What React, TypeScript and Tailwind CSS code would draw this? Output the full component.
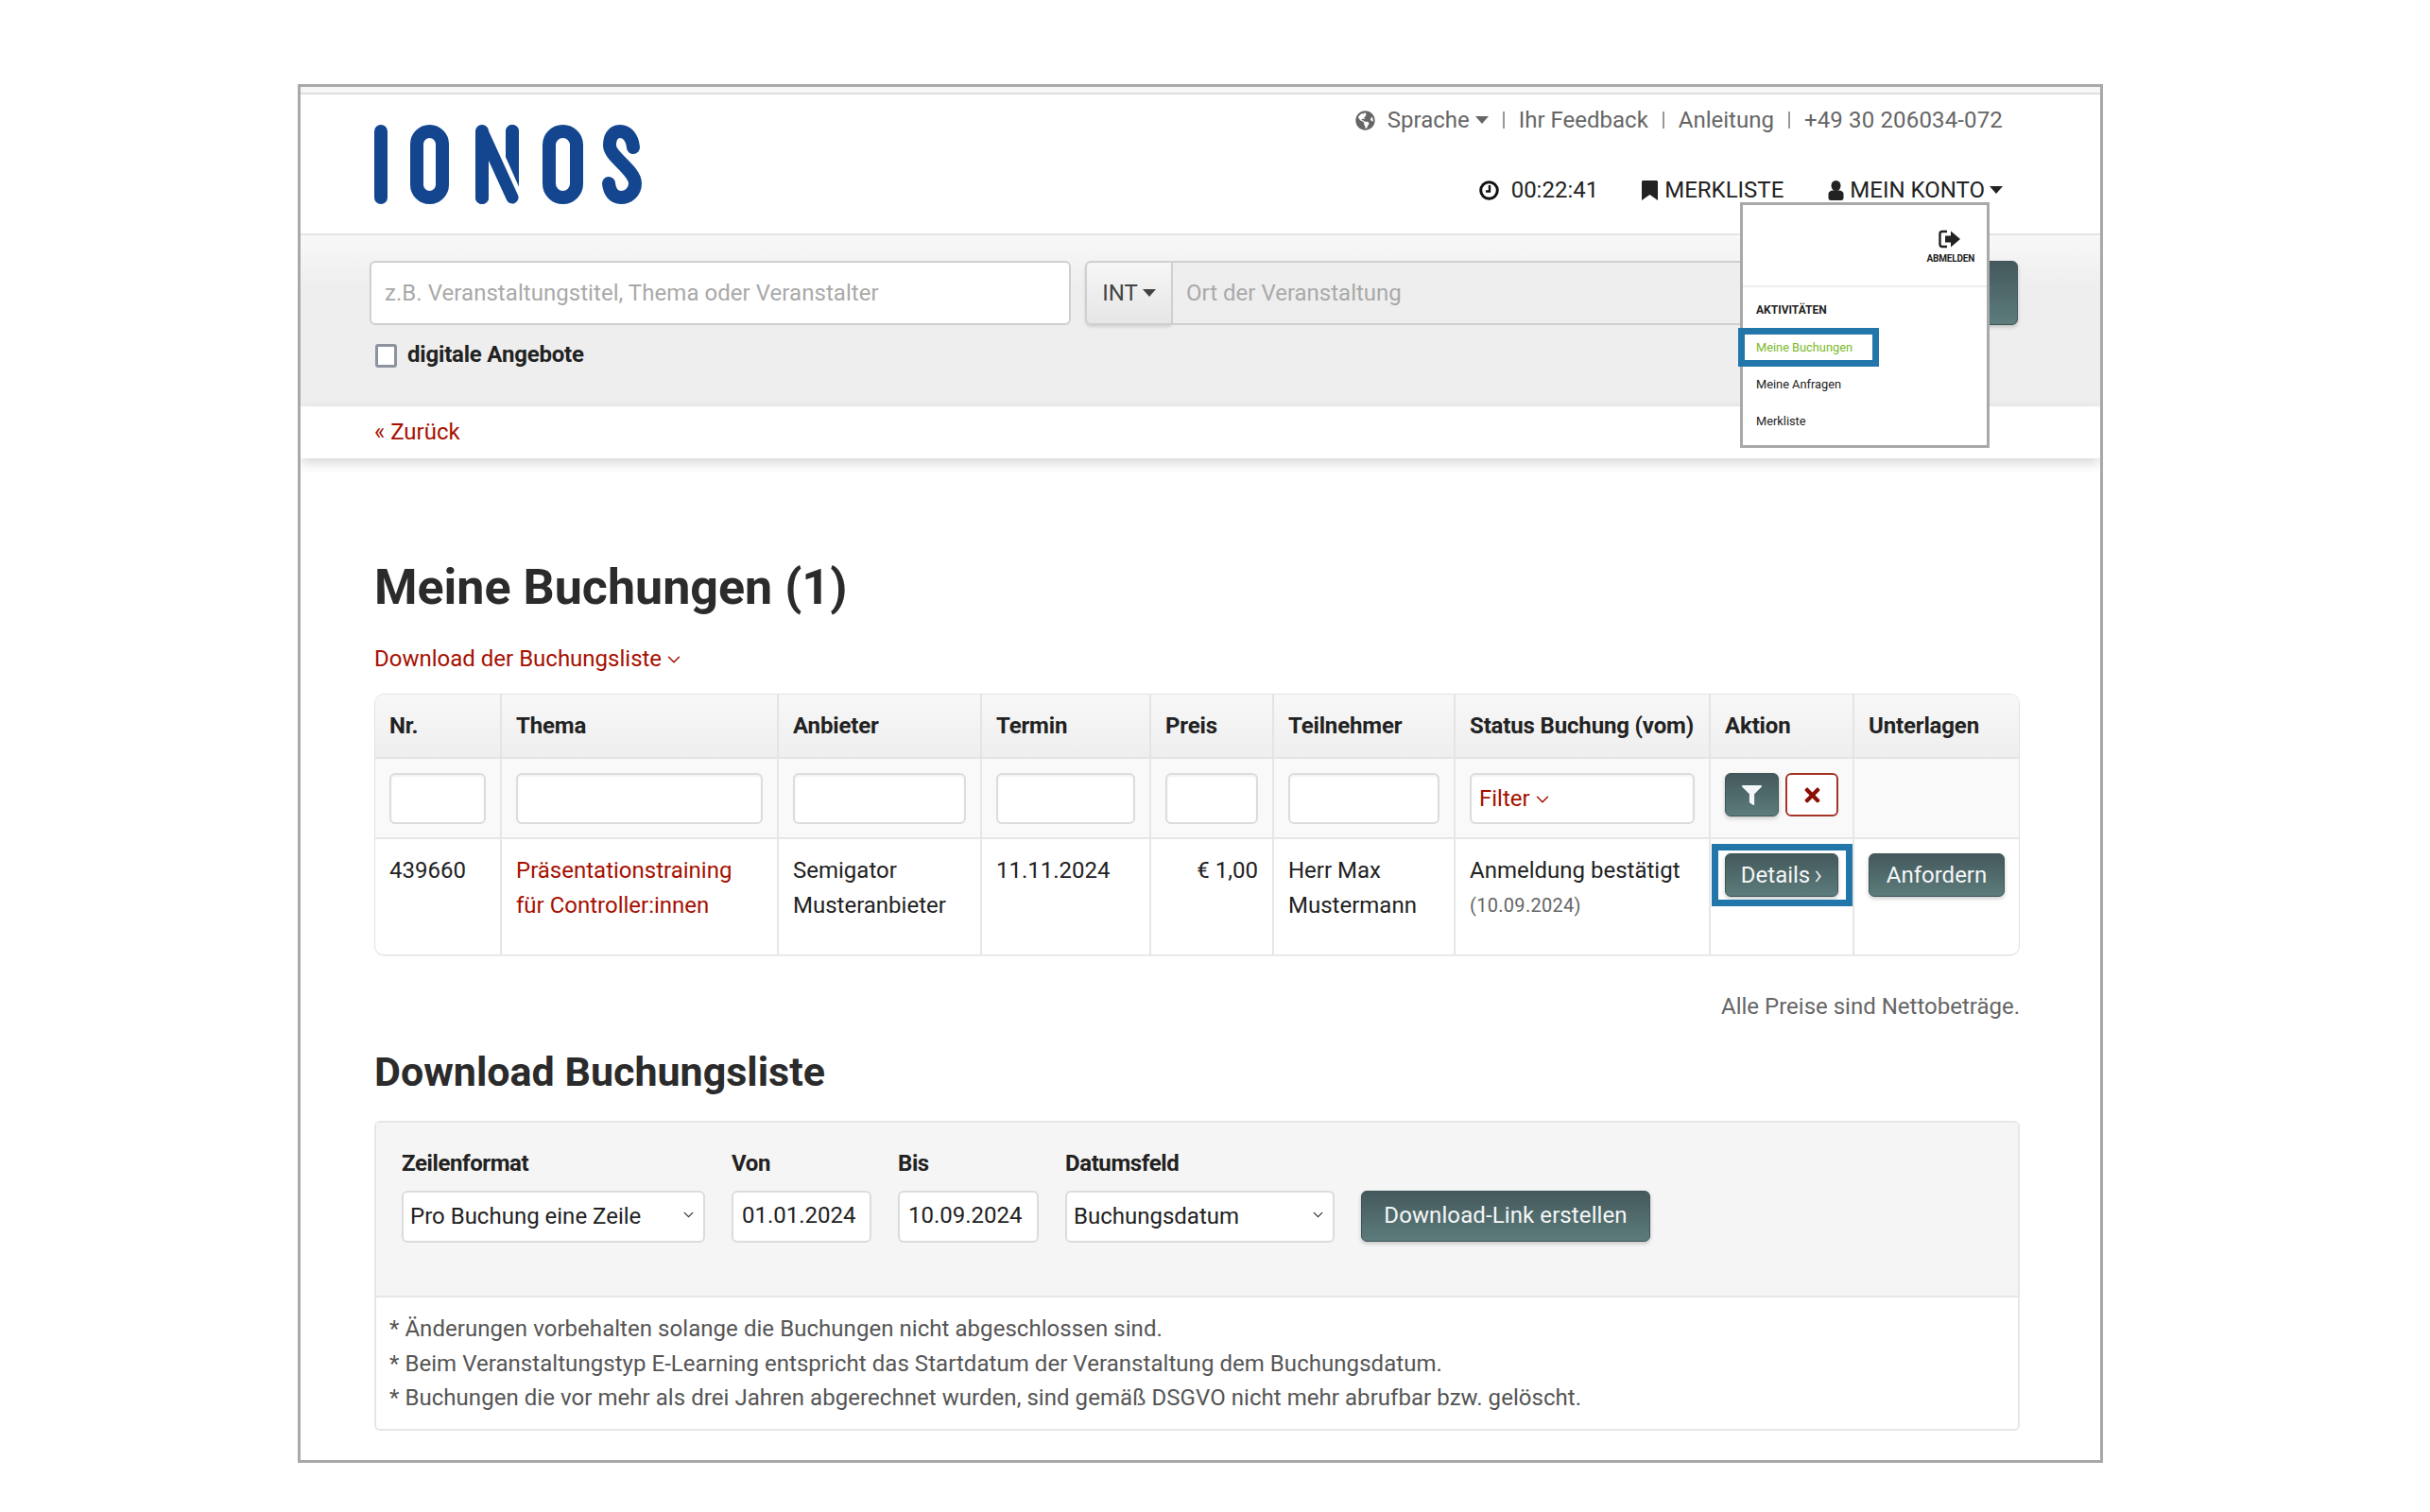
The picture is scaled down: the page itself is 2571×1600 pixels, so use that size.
import React from 'react';
import { ChevronDown } from 'lucide-react';
import { FaFilter, FaGlobeAmericas, FaTimes } from 'react-icons/fa';

const Logo = () => (
  <svg width="283" height="84" viewBox="0 0 283 84" fill="none" stroke="#13468f" strokeWidth="14" strokeLinecap="round">
    <path d="M7 7V77" />
    <rect x="45" y="7" width="27" height="70" rx="13.5" />
    <path d="M114 7V77M146 7V77" />
    <path d="M112 -2L152 88" stroke="#fff" strokeWidth="20" strokeLinecap="butt" />
    <path d="M114 7L146 77" strokeWidth="13" />
    <path d="M114 7V77M146 7V30" />
    <rect x="185" y="7" width="29" height="70" rx="14.5" />
    <path d="M274 24C273 13 267 7 260 7C252 7 249 14 249 22C249 34 276 48 276 62C276 71 269 77 261 77C253 77 249 71 248 62" />
  </svg>
);

const SignOut = () => (
  <svg width="24" height="20" viewBox="0 0 24 20" fill="#222">
    <path d="M9 2H4C2.5 2 1.5 3 1.5 4.5V15.5C1.5 17 2.5 18 4 18H9" fill="none" stroke="#222" strokeWidth="2.4" />
    <path d="M7 6.5H13V1.5L23 10L13 18.5V13.5H7Z" />
  </svg>
);

const ClockIcon = () => (
  <svg width="21" height="21" viewBox="0 0 21 21" fill="none" stroke="#111" className="mr-[13px]">
    <circle cx="10.5" cy="10.5" r="8.8" strokeWidth="3" />
    <path d="M11 5V11.5H7" strokeWidth="2.4" />
  </svg>
);

const BookmarkIcon = () => (
  <svg width="19" height="21" viewBox="0 0 19 21" fill="#222" className="ml-[45px] mr-[6px]">
    <path d="M1 1.5C1 .7 1.7 0 2.5 0H16.5C17.3 0 18 .7 18 1.5V21L9.5 15L1 21Z" />
  </svg>
);

const UserIcon = () => (
  <svg width="17" height="21" viewBox="0 0 17 21" fill="#222" className="ml-[47px] mr-[6px]">
    <ellipse cx="8.5" cy="5.5" rx="5" ry="5.5" />
    <path d="M.5 18.5V14.5C.5 11.5 3.5 10.5 5 10.5H12C13.5 10.5 16.5 11.5 16.5 14.5V18.5C16.5 20 15.5 21 14 21H3C1.500 21 .5 20 .5 18.5Z" />
  </svg>
);

const Caret = ({ className = '' }: { className?: string }) => (
  <span className={`h-0 w-0 border-x-[7px] border-t-[8px] border-x-transparent border-t-current ${className}`} />
);

const filterCell = 'h-[54px] w-full rounded-md border-2 border-[#dcdcdc] bg-white shadow-[inset_0_2px_2px_rgba(0,0,0,0.05)]';
const headCell = 'border-b-2 border-r-2 border-[#e4e4e4] px-[15px] text-left font-bold tracking-[-0.15px] whitespace-nowrap last:border-r-0';
const filterTd = 'border-b-2 border-r-2 border-[#e6e6e6] px-[15px] pt-[15px] align-top last:border-r-0';
const bodyTd = 'border-r-2 border-[#e6e6e6] px-[15px] pt-[15px] align-top leading-[37px] last:border-r-0';
const tealBtn = 'rounded-md border border-[#3f5558] bg-linear-to-b from-[#44595c] to-[#5d7c7c] text-[#f4f7f7] shadow-[0_2px_4px_rgba(0,0,0,0.2)]';
const fieldLabel = 'flex flex-col font-bold tracking-[-0.4px]';
const fieldBox = 'mt-[11px] h-[55px] w-full rounded-md border-2 border-[#dcdcdc] bg-white font-normal tracking-normal';

export default function App() {
  const notes = [
    'Änderungen vorbehalten solange die Buchungen nicht abgeschlossen sind.',
    'Beim Veranstaltungstyp E-Learning entspricht das Startdatum der Veranstaltung dem Buchungsdatum.',
    'Buchungen die vor mehr als drei Jahren abgerechnet wurden, sind gemäß DSGVO nicht mehr abrufbar bzw. gelöscht.',
  ];

  return (
    <div className="h-[1600px] w-full bg-white pl-[315px] pt-[89px] font-['Roboto',sans-serif] text-[24px] leading-[36px] text-[#222]">
      <div className="relative h-[1459px] w-[1910px] overflow-hidden border-[3px] border-[#a9a9a9]">
        {/* top strip */}
        <div className="h-[8px] border-b-2 border-[#dedede] bg-[#f6f7f8]" />

        {/* header */}
        <header className="flex h-[147px] justify-between pl-[78px] pr-[103px]">
          <div className="pt-[32px]">
            <Logo />
          </div>
          <div className="flex flex-col items-end pt-[9px]">
            <div className="flex items-center text-[#666]">
              <FaGlobeAmericas className="mr-[13px] text-[21px]" />
              <span>Sprache</span>
              <Caret className="ml-[6px]" />
              <span className="mx-[15px] h-[18px] w-[2px] bg-[#999]" />
              <span>Ihr Feedback</span>
              <span className="mx-[15px] h-[18px] w-[2px] bg-[#999]" />
              <span>Anleitung</span>
              <span className="mx-[15px] h-[18px] w-[2px] bg-[#999]" />
              <span className="tracking-[0.15px]">+49 30 206034-072</span>
            </div>
            <div className="mt-[38px] flex items-center">
              <ClockIcon />
              <span>00:22:41</span>
              <BookmarkIcon />
              <span>MERKLISTE</span>
              <UserIcon />
              <span>MEIN KONTO</span>
              <Caret className="ml-[5px]" />
            </div>
          </div>
        </header>

        {/* search */}
        <section className="h-[183px] border-t-2 border-[#e4e4e4] bg-linear-to-b from-[#f8f8f8] to-[#eeeeee] to-30% pl-[73px] pr-[87px] pt-[27px]">
          <div className="flex h-[68px]">
            <div className="flex w-[742px] items-center rounded-md border-2 border-[#cfcfcf] bg-white px-[14px] tracking-[0.05px] text-[#a9a9a9]">
              z.B. Veranstaltungstitel, Thema oder Veranstalter
            </div>
            <div className="ml-[15px] flex w-[91px] items-center justify-center rounded-l-md border-2 border-r-0 border-[#cfcfcf] bg-linear-to-b from-[#f6f6f6] to-[#e6e6e6] text-[#444] shadow-[0_2px_3px_rgba(0,0,0,0.12)]">
              INT
              <Caret className="ml-[5px]" />
            </div>
            <div className="flex flex-1 items-center border-y-2 border-l-2 border-[#cfcfcf] bg-[#eeeeee] pl-[14px] text-[#a9a9a9]">
              Ort der Veranstaltung
            </div>
            <button className={`${tealBtn} w-[90px]`} aria-label="Suchen" />
          </div>
          <div className="mt-[13px] flex items-center pl-[6px]">
            <span className="h-[25px] w-[23px] rounded-[3px] border-[3px] border-[#8d93a0] bg-white" />
            <span className="ml-[11px] pb-[2px] font-bold tracking-[-0.2px]">digitale Angebote</span>
          </div>
        </section>

        {/* back link */}
        <div className="relative flex h-[55px] items-center bg-white pb-[2px] pl-[78px] text-[#a61000] shadow-[0_5px_12px_rgba(0,0,0,0.16)]">
          « Zurück
        </div>

        {/* main */}
        <main className="pl-[78px] pr-[85px] pt-[106px]">
          <h1 className="text-[52px] font-bold leading-[62px] text-[#2b2b2b]">Meine Buchungen (1)</h1>
          <a className="mt-[26px] flex items-center text-[#a61000]">
            Download der Buchungsliste
            <ChevronDown className="ml-[2px] mt-[2px] size-[22px]" strokeWidth={1.6} />
          </a>

          <div className="mt-[19px] h-[277px] overflow-hidden rounded-[10px] border border-[#e2e2e2] shadow-[0_1px_1px_rgba(0,0,0,0.06)]">
            <table className="w-full table-fixed border-separate border-spacing-0">
              <colgroup>
                <col className="w-[134px]" />
                <col className="w-[293px]" />
                <col className="w-[215px]" />
                <col className="w-[179px]" />
                <col className="w-[130px]" />
                <col className="w-[192px]" />
                <col className="w-[270px]" />
                <col className="w-[152px]" />
                <col className="w-[174px]" />
              </colgroup>
              <thead>
                <tr className="h-[68px] bg-linear-to-b from-[#f8f8f8] to-[#eeeeee]">
                  <th className={headCell}>Nr.</th>
                  <th className={headCell}>Thema</th>
                  <th className={headCell}>Anbieter</th>
                  <th className={headCell}>Termin</th>
                  <th className={headCell}>Preis</th>
                  <th className={headCell}>Teilnehmer</th>
                  <th className={headCell}>Status Buchung (vom)</th>
                  <th className={headCell}>Aktion</th>
                  <th className={headCell}>Unterlagen</th>
                </tr>
              </thead>
              <tbody>
                <tr className="h-[85px] bg-[#f9f9f9]">
                  {[0, 1, 2, 3, 4, 5].map((i) => (
                    <td key={i} className={filterTd}>
                      <div className={filterCell} />
                    </td>
                  ))}
                  <td className={filterTd}>
                    <div className={`${filterCell} flex items-center pl-[8px] text-[#a61000]`}>
                      Filter
                      <ChevronDown className="ml-[2px] mt-[2px] size-[22px]" strokeWidth={1.6} />
                    </div>
                  </td>
                  <td className={filterTd}>
                    <div className="flex gap-[7px]">
                      <button className={`${tealBtn} flex h-[46px] w-[57px] items-center justify-center`} aria-label="Filtern">
                        <FaFilter className="text-[21px]" />
                      </button>
                      <button className="flex h-[46px] w-[56px] items-center justify-center rounded-md border-2 border-[#a5352a] bg-white text-[#8a0f05]" aria-label="Löschen">
                        <FaTimes className="text-[23px]" />
                      </button>
                    </div>
                  </td>
                  <td className={filterTd} />
                </tr>
                <tr className="h-[122px]">
                  <td className={bodyTd}>439660</td>
                  <td className={`${bodyTd} text-[#a61000]`}>Präsentationstraining für Controller:innen</td>
                  <td className={bodyTd}>Semigator Musteranbieter</td>
                  <td className={bodyTd}>11.11.2024</td>
                  <td className={`${bodyTd} text-right`}>€ 1,00</td>
                  <td className={bodyTd}>Herr Max Mustermann</td>
                  <td className={bodyTd}>
                    Anmeldung bestätigt
                    <div className="text-[20px] tracking-[0.3px] text-[#666]">(10.09.2024)</div>
                  </td>
                  <td className={bodyTd}>
                    <div className="relative flex">
                      <button className={`${tealBtn} flex h-[46px] w-[120px] items-center justify-center gap-[4px] leading-none`}>
                        Details
                        <span className="pb-[3px] text-[30px] font-light leading-none">›</span>
                      </button>
                      <div className="absolute -left-[14px] -top-[10px] h-[66px] w-[149px] border-[7px] border-[#2376a9]" />
                    </div>
                  </td>
                  <td className={bodyTd}>
                    <button className={`${tealBtn} block h-[46px] w-[144px] leading-none`}>Anfordern</button>
                  </td>
                </tr>
              </tbody>
            </table>
          </div>

          <p className="mt-[36px] text-right text-[#666]">Alle Preise sind Nettobeträge.</p>

          <h2 className="mt-[26px] text-[43px] font-bold leading-[50px] text-[#2b2b2b]">Download Buchungsliste</h2>

          <div className="mt-[27px] h-[328px] rounded-md border-2 border-[#e6e6e6]">
            <div className="h-[185px] border-b-2 border-[#e6e6e6] bg-[#f5f5f5] pl-[27px] pt-[25px]">
              <div className="flex gap-[28px]">
                <label className={`${fieldLabel} w-[321px]`}>
                  Zeilenformat
                  <span className="relative block">
                    <select defaultValue="a" className={`${fieldBox} appearance-none pb-[2px] pl-[7px]`}>
                      <option value="a">Pro Buchung eine Zeile</option>
                    </select>
                    <ChevronDown className="absolute right-[9px] top-[28px] size-[17px]" strokeWidth={1.6} />
                  </span>
                </label>
                <label className={`${fieldLabel} w-[148px]`}>
                  Von
                  <input readOnly value="01.01.2024" className={`${fieldBox} px-[9px] pb-[3px]`} />
                </label>
                <label className={`${fieldLabel} w-[149px]`}>
                  Bis
                  <input readOnly value="10.09.2024" className={`${fieldBox} px-[9px] pb-[3px]`} />
                </label>
                <label className={`${fieldLabel} w-[285px]`}>
                  Datumsfeld
                  <span className="relative block">
                    <select defaultValue="b" className={`${fieldBox} appearance-none pb-[2px] pl-[7px]`}>
                      <option value="b">Buchungsdatum</option>
                    </select>
                    <ChevronDown className="absolute right-[9px] top-[28px] size-[17px]" strokeWidth={1.6} />
                  </span>
                </label>
                <button className={`${tealBtn} mt-[47px] h-[54px] w-[306px] pb-[2px] tracking-[0.1px]`}>Download-Link erstellen</button>
              </div>
            </div>
            <div className="pl-[14px] pt-[15px] leading-[36.5px] tracking-[0.05px] text-[#555]">
              {notes.map((note) => (
                <p key={note}>* {note}</p>
              ))}
            </div>
          </div>
        </main>

        {/* account menu */}
        <div className="absolute left-[1523px] top-[122px] h-[260px] w-[264px] border-[3px] border-[#a9a9a9] bg-white text-[12.8px] leading-[39px]">
          <div className="flex h-[87px] flex-col items-end border-b-2 border-[#eeeeee] pr-[13px] pt-[26px]">
            <div className="mr-[14px]">
              <SignOut />
            </div>
            <span className="mt-[1px] text-[10px] font-bold leading-[20px] tracking-[-0.2px]">ABMELDEN</span>
          </div>
          <div className="pl-[14px] pt-[5px]">
            <div className="text-[12px] font-bold">AKTIVITÄTEN</div>
            <div className="text-[#7ab929]">Meine Buchungen</div>
            <div>Meine Anfragen</div>
            <div>Merkliste</div>
          </div>
          <div className="absolute -left-[5px] top-[130px] h-[41px] w-[149px] border-[7px] border-[#2376a9]" />
        </div>
      </div>
    </div>
  );
}
